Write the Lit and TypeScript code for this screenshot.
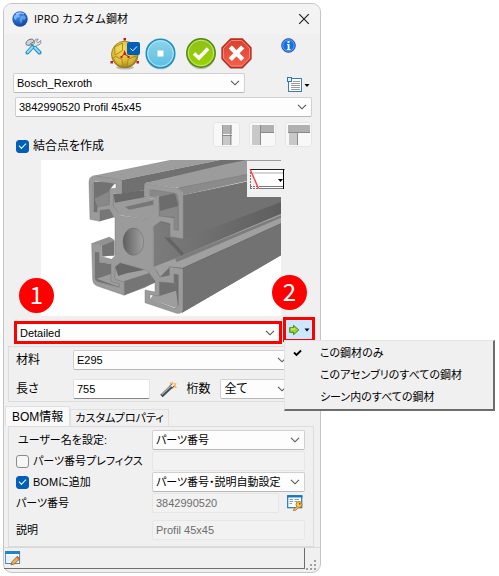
import { LitElement, html, css, svg, TemplateResult } from "lit";
import { customElement, property, state } from "lit/decorators.js";

const chevron = html`<svg class="chevron" width="10" height="6" viewBox="0 0 10 6" aria-hidden="true">
  <path d="M1 .8 5 4.8 9 .8" fill="none" stroke="#555" stroke-width="1.1" />
</svg>`;

const icons = {
  app: svg`<svg width="16" height="16" viewBox="0 0 16 16">
    <defs><radialGradient id="ga" cx=".4" cy=".3" r=".8"><stop offset="0" stop-color="#4a90ea"/><stop offset=".5" stop-color="#2464c8"/><stop offset="1" stop-color="#123a8c"/></radialGradient></defs>
    <circle cx="8" cy="8" r="7.700" fill="url(#ga)"/>
    <path d="M2 5Q5 1.500 9 2L7 4 8 6 5 6.500 4 9 2 8Z" fill="#8fc4fa" opacity=".8"/>
    <path d="M9 5 12 4 14 6.500 12.500 9 10.500 8 9 13 7.500 9Z" fill="#6fb0f6" opacity=".75"/>
    <path d="M4 2.800Q8 .800 12 2.800" stroke="#cfe6ff" fill="none" opacity=".8"/></svg>`,
  close: svg`<svg width="12" height="12" viewBox="0 0 12 12"><path d="M1.200 1.200 10.800 10.800M10.800 1.200 1.200 10.800" stroke="#222" stroke-width="1.200"/></svg>`,
  tools: svg`<svg width="17" height="17" viewBox="0 0 17 17">
    <path d="M.800 5.500Q2 1 7.500 1L9.500 3.500 5.500 5.500 4.500 7.500 1.500 7Z" fill="#cfd3d8" stroke="#6d757e"/>
    <path d="M6 6 10 10" stroke="#7c858e" stroke-width="2.600"/>
    <path d="M15.800 2.500 13 4.800 11.500 3.500 13.300 1Q8.800.800 9.500 5L7.500 7.500 10 9.500 12 7.200Q16.500 7 15.800 2.500Z" fill="#e4e6e9" stroke="#7f878f" stroke-width=".9"/>
    <path d="M7.500 9 2.500 14.500M10 9.800 14.500 14.500" stroke="#1f8fc6" stroke-width="4" stroke-linecap="round"/>
    <path d="M7.300 9.300 2.600 14.300M10 9.800 14.300 14.200" stroke="#8fdcf7" stroke-width="2" stroke-linecap="round"/></svg>`,
  joint: svg`<svg width="30" height="32" viewBox="0 0 30 32">
    <defs><radialGradient id="gj" cx=".42" cy=".3" r=".75"><stop offset="0" stop-color="#f3dc62"/><stop offset=".6" stop-color="#dcb932"/><stop offset="1" stop-color="#94750f"/></radialGradient></defs>
    <ellipse cx="15" cy="29.500" rx="9" ry="2" fill="#bbb"/>
    <circle cx="14.800" cy="16.500" r="13.300" fill="url(#gj)" stroke="#8c7010" stroke-width=".8"/>
    <path d="M4.500 9 12.500 5V12.500L5 17ZM3 20 6 18.500 12 21.500 12.500 28.500 7 26.500ZM17.500 28.500 18 21.500 25.500 18 26.500 20.500 23 26Z" fill="#f0d95e" fill-opacity=".35" stroke="#a3841a" stroke-width=".9"/>
    <path d="M14.500 16V12.500M14.500 16 11.500 18.500M14.500 16 18.500 18.500" stroke="#b02a18"/>
    <path d="M13.500 0h2.500v2.500h-2.500zM.500 23H3v2.500H.500zM26.500 23H29v2.500h-2.500zM13.500 14.500H16V17h-2.500zM10.500 18h2v2h-2zM17.500 18h2v2h-2z" fill="#c41a1a"/>
    <rect x="17" y="4" width="13" height="13" rx="2" fill="#005fb8"/>
    <path d="M20.500 10.500 22.800 12.800 27 8.500" fill="none" stroke="#fff"/></svg>`,
  stop: svg`<svg width="31" height="32" viewBox="0 0 31 32">
    <defs><linearGradient id="gb" x2="0" y2="1"><stop offset="0" stop-color="#8ed3ea"/><stop offset="1" stop-color="#5bbfe2"/></linearGradient></defs>
    <circle cx="15.500" cy="17" r="14.500" fill="#aaa" opacity=".6"/>
    <circle cx="15.500" cy="15.500" r="14.300" fill="url(#gb)" stroke="#1b8fc0" stroke-width="1.500"/>
    <circle cx="15.500" cy="15.500" r="12.800" fill="none" stroke="#b7e6f5"/>
    <rect x="12.500" y="12.500" width="6" height="6" fill="#fff"/></svg>`,
  ok: svg`<svg width="30" height="32" viewBox="0 0 30 32">
    <defs><linearGradient id="gk" x2="0" y2="1"><stop offset="0" stop-color="#8fbf18"/><stop offset="1" stop-color="#9ad400"/></linearGradient></defs>
    <circle cx="15" cy="17" r="14.300" fill="#999" opacity=".6"/>
    <circle cx="15" cy="15" r="14.200" fill="url(#gk)" stroke="#4f8a12" stroke-width="1.500"/>
    <circle cx="15" cy="15" r="12.700" fill="none" stroke="#c5e67a"/>
    <path d="M8 15.500 13 20 22 10.500" fill="none" stroke="#fff" stroke-width="3.600"/></svg>`,
  cancel: svg`<svg width="31" height="32" viewBox="0 0 31 32">
    <defs><linearGradient id="gc" x2="0" y2="1"><stop offset="0" stop-color="#d8402c"/><stop offset="1" stop-color="#f5604c"/></linearGradient></defs>
    <path d="M9.500 3H21.500L30 11V22L21.500 31H9.500L1 22V11Z" fill="#999" opacity=".6"/>
    <path d="M9.700 1H21.300L30 9.700V20.800L21.300 29.500H9.700L1 20.800V9.700Z" fill="url(#gc)" stroke="#b52a1c" stroke-width="1.300"/>
    <path d="M10.300 2.500H20.700L28.500 10.300V20.200L20.700 28H10.300L2.500 20.200V10.300Z" fill="none" stroke="#f08a7c"/>
    <path d="M9.300 9 21.700 21.500M21.700 9 9.300 21.500" stroke="#fff" stroke-width="4.600"/></svg>`,
  info: svg`<svg width="15" height="15" viewBox="0 0 15 15">
    <circle cx="7.500" cy="7.500" r="6.800" fill="#1670e8" stroke="#1d4fa8"/><circle cx="7.500" cy="7.500" r="5.700" fill="none" stroke="#7db4fa" stroke-width=".8"/>
    <path d="M6.500 3h2v2h-2zM6 6h2.500v5H9.500v1H5.800v-1h.9V7H6z" fill="#fff"/></svg>`,
  list: svg`<svg width="23" height="16" viewBox="0 0 23 16">
    <rect x="1.500" y="1.500" width="13" height="13" fill="#fff" stroke="#3b7db0"/>
    <path d="M6 4.500H13M4 6.500H13M4 8.500H13M4 10.500H13M4 12.500H13" stroke="#9a9a9a"/>
    <rect x=".500" y=".500" width="4" height="4" fill="#e6f2fb" stroke="#2f78ae"/>
    <path d="M17.500 7H22.500L20 10Z" fill="#000"/></svg>`,
  end1: svg`<svg width="22" height="20" viewBox="0 0 22 20"><path d="M6 0H16V9H6Z" fill="#b2b2b2"/><path d="M6 11H16V20H6Z" fill="#c8c8c8"/><path d="M6.500 0V20M14.500 0V20" stroke="#999"/><path d="M6 10.500H16" stroke="#888"/></svg>`,
  end2: svg`<svg width="22" height="20" viewBox="0 0 22 20"><path d="M0 0H8V20H0Z" fill="#c8c8c8"/><path d="M8 0H22V7H8Z" fill="#b0b0b0"/><path d="M8.500 0V20M8 7.500H22" stroke="#8a8a8a"/></svg>`,
  end3: svg`<svg width="22" height="20" viewBox="0 0 22 20"><path d="M0 0H22V7H0Z" fill="#b0b0b0"/><path d="M1 8H9V20H1Z" fill="#c8c8c8"/><path d="M0 7.500H22M9.500 8V20" stroke="#8a8a8a"/></svg>`,
  miter: svg`<svg width="36" height="20" viewBox="0 0 36 20">
    <path d="M2 0H35V19H10Z" fill="#fff"/><path d="M4 4H34" stroke="#d4d4d4" stroke-width="2"/>
    <path d="M1 .500H35.500" stroke="#222"/><path d="M10 17.500H34M10 19.500H35" stroke="#777"/><path d="M34.500 0V20" stroke="#000"/>
    <path d="M1.500 3V20M1 17.500H9M1 19.500H9" stroke="#777" stroke-dasharray="2 1"/>
    <path d="M1 0 9.500 19.500" stroke="#f33" stroke-width="1.300"/><path d="M29 10H34L31.500 13Z" fill="#000"/></svg>`,
  arrow: svg`<svg width="21" height="12" viewBox="0 0 21 12">
    <path d="M.700 3.700H4.500V1.300L9.800 6 4.500 10.700V8.300H.700Z" fill="#a4d42a" stroke="#4c8012"/><path d="M2 5H6" stroke="#dcf290"/>
    <path d="M15.500 4.500H20.500L18 7.500Z" fill="#000"/></svg>`,
  wand: svg`<svg width="17" height="17" viewBox="0 0 17 17">
    <path d="M12.500 0 13.500 2.500 16.500 2 15.500 4.500 17 7 14 6.500 12.500 8.500 11 6 8.500 5 10.500 3.500 9.500 1 12 2Z" fill="#f9b04a"/>
    <path d="M1.500 15 13 4" stroke="#3e464e" stroke-width="3.400"/><path d="M2 13.500 12 4" stroke="#aab4bc" stroke-width="1.200"/><path d="M11.500 5.500 14 3" stroke="#e8eef4" stroke-width="2"/></svg>`,
  key: svg`<svg width="16" height="16" viewBox="0 0 16 16">
    <rect x=".700" y=".700" width="14" height="12" fill="#fff" stroke="#1b78b8" stroke-width="1.200"/><path d="M0 1.500H15.500" stroke="#1b78b8" stroke-width="2"/>
    <path d="M2.500 4.500H6M2.500 6.500H6M2.500 8.500H5M7.500 4.500H12M7.500 6.500H10" stroke="#7aa6c6"/>
    <circle cx="12" cy="9.500" r="3" fill="#f8c95a" stroke="#b87614"/><path d="M10 11.500 6 15.300H8.500L11.500 12.500" fill="#f8c95a" stroke="#b87614" stroke-width=".9"/><circle cx="12.700" cy="8.800" r=".9" fill="#7a4b08"/></svg>`,
  edit: svg`<svg width="16" height="16" viewBox="0 0 16 16">
    <rect x=".600" y="1.500" width="14" height="12" fill="#fff" stroke="#3a8cc4"/><path d="M0 2.500H15" stroke="#1f86c8" stroke-width="3"/>
    <path d="M2 5.500H13V12H2Z" fill="#e9f1f7"/>
    <path d="M6 14.800 7 11.800 12.300 6.300 15 8.800 9.300 14Z" fill="#f3b04a" stroke="#7a5a20" stroke-width=".8"/><path d="M12.300 6.300 15 8.800 13.800 10 11.200 7.500Z" fill="#e05a50"/></svg>`,
  grip: svg`<svg width="12" height="12" viewBox="0 0 12 12"><path d="M8 0h2v2H8zM4 4h2v2H4zM8 4h2v2H8zM0 8h2v2H0zM4 8h2v2H4zM8 8h2v2H8z" fill="#a0a0a0"/></svg>`,
};

/* Aluminium extrusion seen at an angle: side faces first, end face on top. */
const profile = svg`<svg class="profile" viewBox="-57 12 720 468" role="img" aria-label="Profil 45x45">
  <defs>
    <linearGradient id="ph"><stop offset="0" stop-color="#5f5f5f"/><stop offset="1" stop-color="#a2a2a2"/></linearGradient>
    <linearGradient id="ps"><stop offset="0" stop-color="#7c7c7c"/><stop offset="1" stop-color="#5e5e5e"/></linearGradient>
  </defs>
  <path d="M370 118 663 60V298L366 470 290 380 280 200Z" fill="#707070"/>
  <path d="M96 60 330 12H480L185 72Z" fill="#9d9d9d"/>
  <path d="M185 72 480 12H580L255 82 253 102 185 115Z" fill="#707070"/>
  <path d="M253 82 500 24 560 12H663V44L368 102Q362 92 345 96Z" fill="#9c9c9c"/>
  <path d="M345 97 663 34V52L370 118Q368 100 345 97Z" fill="#8b8b8b"/>
  <path d="M352 97 663 36" stroke="#777" stroke-width="1"/>
  <path d="M370 118 663 54V140L370 248Z" fill="#727272"/>
  <path d="M280 210 303 198 330 206V243L370 250 663 138V176L365 305 280 335Z" fill="url(#ps)"/>
  <path d="M312 243 330 247 372 292 365 300Z" fill="#646464"/>
  <path d="M282 332 372 297 663 173V202L368 336 330 332 300 363Z" fill="#a0a0a0"/>
  <path d="M345 308 663 178V185L380 306 350 318Z" fill="#7d7d7d"/>
  <path d="M368 337 663 203V298L366 470Z" fill="#727272"/>
  <path d="M368 337 663 203" stroke="#666" stroke-width="1.500"/>
  <path d="M158 115 253 104V122L283 130V166L262 190 182 178 158 152Z" fill="#9b9b9b"/>
  <path d="M160 115 253 102V124L165 140Z" fill="#696969"/>
  <path d="M195 153 280 133V146L208 161Z" fill="#777"/>
  <path d="M120 163 148 157 163 184 120 196Z" fill="#777"/>
  <path d="M95 262 148 242 163 252V300L126 300V268Z" fill="#929292"/>
  <path d="M126 269 163 254V296L128 302Z" fill="#737373"/>
  <path d="M165 332 180 320 265 345 285 372V378L255 395 193 418 165 378Z" fill="#a0a0a0"/>
  <path d="M165 332 180 320 262 340 200 352 175 360Z" fill="#686868"/>
  <path d="M193 375 270 350 285 372V380L193 418Z" fill="#757575"/>
  <path d="M285 408 300 375 345 380 355 458 270 430Z" fill="#9e9e9e"/>
  <path d="M298 378H342L355 402 298 420Z" fill="#707070"/>
  <path d="M100 78H168L150 100V148L113 155V168H100Z" fill="#727272"/>
  <path d="M104 128 148 106V148L113 155Z" fill="#888"/>
  <path d="M268 100H355V222H342V182H297V122H268Z" fill="#888"/>
  <path d="M297 122 345 112 355 150 300 165Z" fill="#6c6c6c"/>
  <path d="M104 288H117V318L155 325 160 370 180 384V395L104 376Z" fill="#747474"/>
  <path d="M110 368 158 352V372L180 385V394Z" fill="#9c9c9c"/>
  <path fill="#9b9b9b" fill-rule="evenodd" stroke="#6e6e6e" stroke-width="1.200" stroke-linejoin="round"
    d="M90 190 87 78Q87 60 104 60L185 72V115L160 112V150L182 179 262 190 283 166V128L253 122V82L345 97Q370 100 370 122V249L330 242V203L303 196 280 212V328L300 363 328 358V332L369 338V462Q366 473 350 472L255 440V402L285 408V375L262 344 180 320 165 332V370L193 378V418L112 390Q99 386 98 370L95 262 125 268V302L155 310 165 300V186L148 160 120 163V196ZM100 168 113 169V153L148 146V98L168 97V84L110 76Q99 76 99 88ZM268 100V118L297 124V180L342 185V221L355 223V126Q354 113 340 111ZM104 288 104 364Q106 374 114 378L178 394V383L153 377V324L117 318V290ZM355 356 342 354V382L298 378V420L270 416V430L342 456Q354 458 355 446Z"/>
  <ellipse cx="220" cy="257" rx="31" ry="41" fill="url(#ph)" stroke="#666" stroke-width="1.500"/>
</svg>`;

@customElement("combo-box")
export class ComboBox extends LitElement {
  @property() label = "";
  @property({ type: Array }) options: string[] = [];
  @property({ type: Boolean, reflect: true }) marked = false;

  static styles = css`
    :host { display: block; position: relative; height: 20px; box-sizing: border-box; min-width: 0;
      border: 1px solid #d0d0d0; border-bottom-color: #b8b8b8; border-radius: 2px; background: #fdfdfd; }
    :host([marked]) { height: 23px; border: 3px solid #f00; border-radius: 0; }
    select { appearance: none; display: block; width: 100%; height: 100%; border: 0; margin: 0; padding: 0 3px;
      background: none; color: #000; font: inherit; font-feature-settings: inherit; outline: none; }
    .chevron { position: absolute; right: 4px; top: 50%; margin-top: -3px; pointer-events: none; }
  `;

  render() {
    return html`<select aria-label=${this.label}>${this.options.map((o) => html`<option>${o}</option>`)}</select>${chevron}`;
  }
}

@customElement("app-root")
export class AppRoot extends LitElement {
  @state() private scope = 0;
  private scopes = ["この鋼材のみ", "このアセンブリのすべての鋼材", "シーン内のすべての鋼材"];

  static styles = css`
    :host { display: block; box-sizing: border-box; padding: 3px; background: #fff; color: #000;
      font: 12px/16px "Liberation Sans", "Noto Sans CJK JP", sans-serif; font-feature-settings: "palt"; }
    * { box-sizing: border-box; }
    svg { display: block; flex: none; }
    button { border: 0; padding: 0; background: none; font: inherit; color: inherit; font-feature-settings: inherit; }
    .dialog { max-width: 318px; border: 1px solid #c4c4c4; border-radius: 9px; background: #f0f0f0; }
    .title { display: flex; align-items: center; gap: 6px; height: 30px; padding: 0 10px 0 8px;
      border-radius: 8px 8px 0 0; background: #f3f3f3; }
    h1 { flex: 1; margin: 0; font: 11px/16px "Open Sans", "Noto Sans CJK JP", sans-serif; }
    .toolbar { display: flex; align-items: flex-start; height: 39px; padding: 4px 24px 0 21px; }
    .actions { display: flex; gap: 10px; margin: 0 29px 0 auto; }
    .pair { display: flex; gap: 5px; }
    .small { font-size: 11px; }
    .maker { display: flex; align-items: flex-end; gap: 42px; padding: 0 10px 0 9px; }
    .grow { flex: 1; }
    .size { margin: 4px 8px 0 11px; }
    .joint { display: flex; justify-content: space-between; align-items: flex-start; height: 32px; margin: 5px 8px 0 12px; }
    .joint label { align-self: flex-end; }
    .ends { display: flex; gap: 9px; }
    .ends button { display: flex; align-items: center; justify-content: center; width: 27px; height: 25px;
      border: 1px solid #e6e6e6; border-radius: 3px; background: #f8f8f8; }
    label { display: flex; align-items: center; gap: 4px; white-space: nowrap; }
    input[type="checkbox"] { appearance: none; flex: none; position: relative; width: 13px; height: 13px; margin: 0;
      border: 1px solid #8a8a8a; border-radius: 3px; background: #f6f6f6; }
    input[type="checkbox"]:checked { border-color: #005fb8; background: #005fb8; }
    input[type="checkbox"]:checked::after { content: ""; position: absolute; left: 2px; top: 2px; width: 6px; height: 3px;
      border: solid #fff; border-width: 0 0 1px 1px; transform: rotate(-45deg); }
    .view { position: relative; margin: 6px 39px 0 37px; background: #fff; }
    .profile { width: 100%; height: auto; }
    .miter { position: absolute; top: 1px; right: -4px; display: flex; align-items: center; justify-content: flex-end; width: 38px; height: 36px; background: #f0f0f0; }
    .badge { position: absolute; width: 35px; height: 35px; border-radius: 50%; background: #f00; color: #fff;
      font: 24px/32px "Noto Sans CJK JP", sans-serif; text-align: center; }
    .one { left: -22px; bottom: 3px; }
    .two { right: -26px; bottom: 6px; }
    .detail { display: flex; align-items: flex-start; gap: 1px; padding: 1px 5px 0 10px; }
    .detail combo-box { margin-top: 4px; }
    .apply { position: relative; }
    .apply-button { display: flex; align-items: center; justify-content: center; width: 32px; height: 25px;
      border: 3px solid #f00; background: #cce8ff; }
    .menu { position: absolute; z-index: 1; top: 23px; left: 1px; width: 211px; padding: 1px 0; border: 1px solid #e3e3e3;
      border-right: 2px solid #6d6d6d; border-bottom: 2px solid #6d6d6d; background: #f0f0f0; font-size: 11px; }
    .menu button { display: flex; align-items: center; width: 100%; height: 22px; white-space: nowrap; }
    .tick { width: 35px; padding-left: 8px; }
    .group { display: grid; gap: 9px; margin: 2px 19px 0 4px; padding: 3px 8px 2px 7px; border: 1px solid #dcdcdc; }
    .row { display: flex; align-items: center; height: 20px; }
    .name { width: 57px; flex: none; }
    .box { width: 100%; min-width: 0; height: 20px; padding: 0 3px; border: 1px solid #e2e2e2; border-bottom-color: #868686;
      border-radius: 2px; background: #fff; color: #000; font: inherit; font-size: 11px; outline: none; }
    .box:disabled { border-color: #e6e6e6; background: #f2f2f2; color: #6d6d6d; }
    .length { flex: 79; }
    .wand { margin: 0 9px 0 10px; }
    .digits { margin-right: 10px; white-space: nowrap; }
    .places { flex: 71; }
    .tabs { display: flex; align-items: flex-end; height: 20px; margin: 4px 0 0 1px; }
    .tab { height: 17px; padding: 0 4px; border: 1px solid #e0e0e0; border-bottom: 0; font-size: 11px; white-space: nowrap; }
    .active { height: 20px; padding: 0 6px; background: #f9f9f9; font-size: 12px; }
    .panel { display: grid; grid-template-columns: 136px 1fr; gap: 1px 0; align-items: center; margin: 0 6px 0 4px; padding: 3px 8px 6px 7px;
      border: 1px solid #dcdcdc; font-size: 11px; }
    .panel > * { min-height: 20px; }
    .inner { padding-left: 2px; line-height: 20px; }
    .with-icon { display: flex; align-items: center; gap: 8px; padding-right: 2px; }
    .last { margin-top: 6px; }
    .status { display: flex; height: 25px; border-top: 1px solid #d8d8d8; }
    .well { display: flex; flex: 1; align-items: center; height: 21px; padding-left: 1px; border-right: 1px solid #6d6d6d; border-bottom: 1px solid #6d6d6d; }
    .grip { align-self: flex-end; margin: 0 2px 0 1px; }
  `;

  private tool(label: string, icon: TemplateResult<2>) {
    return html`<button aria-label=${label}>${icon}</button>`;
  }

  render() {
    return html`<main class="dialog">
      <header class="title">${icons.app}<h1>IPRO カスタム鋼材</h1>${this.tool("閉じる", icons.close)}</header>
      <div class="toolbar">
        ${this.tool("設定", icons.tools)}
        <div class="actions">
          <div class="pair">${this.tool("結合点", icons.joint)}${this.tool("停止", icons.stop)}</div>
          <div class="pair">${this.tool("OK", icons.ok)}${this.tool("キャンセル", icons.cancel)}</div>
        </div>
        ${this.tool("情報", icons.info)}
      </div>
      <div class="maker">
        <combo-box class="small grow" label="メーカー" .options=${["Bosch_Rexroth"]}></combo-box>
        ${this.tool("一覧", icons.list)}
      </div>
      <combo-box class="small size" label="サイズ" .options=${["3842990520 Profil 45x45"]}></combo-box>
      <div class="joint">
        <label><input type="checkbox" checked />結合点を作成</label>
        <div class="ends">${this.tool("突き合わせ", icons.end1)}${this.tool("縦勝ち", icons.end2)}${this.tool("横勝ち", icons.end3)}</div>
      </div>
      <div class="view">
        ${profile}
        <button class="miter" aria-label="端部カット">${icons.miter}</button>
        <span class="badge one">1</span><span class="badge two">2</span>
      </div>
      <div class="detail">
        <combo-box class="small grow" marked label="詳細度" .options=${["Detailed"]}></combo-box>
        <div class="apply">
          <button class="apply-button" aria-label="適用範囲" aria-haspopup="menu" aria-expanded="true">${icons.arrow}</button>
          <div class="menu" role="menu">
            ${this.scopes.map((s, i) => html`<button role="menuitemradio" aria-checked=${i === this.scope} @click=${() => (this.scope = i)}>
              <span class="tick">${i === this.scope
                ? svg`<svg width="9" height="8" viewBox="0 0 9 8"><path d="M1 3.500 3.500 6 8 1.500" fill="none" stroke="#000" stroke-width="1.800"/></svg>`
                : ""}</span>${s}</button>`)}
          </div>
        </div>
      </div>
      <section class="group">
        <div class="row"><span class="name">材料</span><combo-box class="small grow" label="材料" .options=${["E295"]}></combo-box></div>
        <div class="row">
          <label class="name" for="length">長さ</label>
          <div class="length"><input class="box" id="length" .value=${"755"} /></div>
          <button class="wand" aria-label="長さを取得">${icons.wand}</button>
          <span class="digits">桁数</span><combo-box class="places" label="桁数" .options=${["全て"]}></combo-box>
        </div>
      </section>
      <div class="tabs" role="tablist">
        <button class="tab active" role="tab" aria-selected="true">BOM情報</button>
        <button class="tab" role="tab" aria-selected="false">カスタムプロパティ</button>
      </div>
      <section class="panel">
        <span class="inner">ユーザー名を設定:</span><combo-box label="ユーザー名を設定" .options=${["パーツ番号"]}></combo-box>
        <label><input type="checkbox" />パーツ番号プレフィクス</label><input class="box" disabled aria-label="プレフィクス" />
        <label><input type="checkbox" checked />BOMに追加</label><combo-box label="BOMに追加" .options=${["パーツ番号・説明自動設定"]}></combo-box>
        <label for="part">パーツ番号</label>
        <div class="with-icon"><input class="box" id="part" disabled .value=${"3842990520"} />${this.tool("番号の設定", icons.key)}</div>
        <label class="last" for="desc">説明</label><input class="box last" id="desc" disabled .value=${"Profil 45x45"} />
      </section>
      <footer class="status"><div class="well">${this.tool("編集", icons.edit)}</div><div class="grip">${icons.grip}</div></footer>
    </main>`;
  }
}
